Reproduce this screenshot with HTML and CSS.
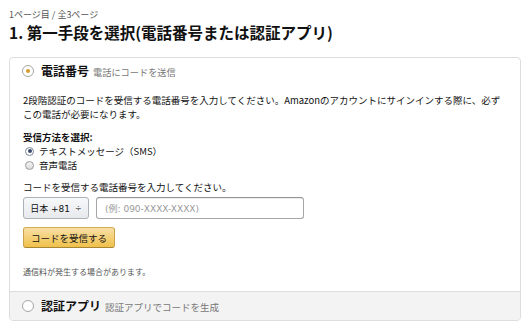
FILE: index.html
```html
<!DOCTYPE html>
<html lang="ja">
<head>
  <meta charset="UTF-8" />
  <title>2段階認証の設定</title>
  <link rel="stylesheet" href="styles.css">
</head>
<body>
  <div class="pagina">
    <div class="migalha">1ページ目 / 全3ページ</div>
    <h1>1. 第一手段を選択(電話番号または認証アプリ)</h1>

    <div class="caixa">
      <div class="opcao opcao-ativa">
        <div class="cabeca">
          <span class="radio grande marcado"></span>
          <span class="titulo">電話番号</span>
          <span class="sub">電話にコードを送信</span>
        </div>
        <div class="corpo">
          <p class="descricao">2段階認証のコードを受信する電話番号を入力してください。Amazonのアカウントにサインインする際に、必ず<br>この電話が必要になります。</p>
          <div class="rotulo">受信方法を選択:</div>
          <label class="escolha"><span class="radio pequeno marcado"></span>テキストメッセージ（SMS）</label>
          <label class="escolha"><span class="radio pequeno"></span>音声電話</label>
          <p class="pedido">コードを受信する電話番号を入力してください。</p>
          <div class="linha-fone">
            <span class="seletor">日本 +81 <span class="setas">÷</span></span>
            <span class="campo">(例: 090-XXXX-XXXX)</span>
          </div>
          <span class="botao">コードを受信する</span>
          <p class="aviso">通信料が発生する場合があります。</p>
        </div>
      </div>

      <div class="opcao opcao-fechada">
        <div class="cabeca">
          <span class="radio grande"></span>
          <span class="titulo">認証アプリ</span>
          <span class="sub sub-grande">認証アプリでコードを生成</span>
        </div>
      </div>
    </div>
  </div>
</body>
</html>
```

FILE: styles.css
```css
* {
  margin: 0; padding: 0; box-sizing: border-box;
}
body {
  font-family: "Noto Sans CJK JP", "Liberation Sans", sans-serif;
  font-size: 9.5px;
  color: #111;
  background: #fff;
}
.pagina {
  padding: 9px 8px 0 9px;
}
.migalha {
  font-size: 9px;
  line-height: 12px;
  color: #555;
}
h1 {
  margin-top: 2px;
  font-size: 15.5px;
  line-height: 18px;
  font-weight: bold;
  color: #111;
}
.caixa {
  margin-top: 16px;
  border: 1px solid #ddd;
  border-radius: 4px;
  overflow: hidden;
}
.cabeca {
  display: flex;
  align-items: center;
  height: 18px;
  padding-left: 12px;
}
.opcao-ativa .cabeca {
  margin-top: 4px;
}
.titulo {
  font-size: 12px;
  font-weight: bold;
  margin-left: 7px;
  line-height: 18px;
}
.sub {
  color: #777;
  font-size: 9.2px;
  margin-left: 4px;
  padding-top: 2px;
}
.sub-grande {
  font-size: 9.5px;
}
.corpo {
  padding: 13px 13px 13px 13px;
}
.descricao {
  line-height: 14px;
}
.rotulo {
  margin-top: 9px;
  font-weight: bold;
  line-height: 14px;
}
.escolha {
  display: flex;
  align-items: center;
  line-height: 14px;
}
.pedido {
  margin-top: 8px;
  line-height: 14px;
}
.linha-fone {
  display: flex;
  gap: 7px;
  margin-top: 3px;
}
.seletor {
  width: 66px;
  height: 22px;
  display: flex;
  align-items: center;
  justify-content: center;
  gap: 5px;
  border: 1px solid #adb1b8;
  border-radius: 3px;
  background: linear-gradient(#f7f8fa, #e7e9ec);
  font-family: "DejaVu Sans", "Noto Sans CJK JP", sans-serif;
  font-size: 9px;
}
.setas {
  font-size: 8px;
  color: #555;
}
.campo {
  width: 208px;
  height: 22px;
  display: flex;
  align-items: center;
  padding-left: 8px;
  border: 1px solid #a6a6a6;
  border-top-color: #949494;
  border-radius: 3px;
  color: #999;
  font-family: "DejaVu Sans", "Noto Sans CJK JP", sans-serif;
  font-size: 9px;
  box-shadow: inset 0 1px 0 rgba(0,0,0,0.07);
}
.botao {
  display: flex;
  align-items: center;
  justify-content: center;
  width: 92px;
  height: 21px;
  margin-top: 8px;
  border: 1px solid #c9a44a;
  border-color: #d2ac52 #c9a24a #a88734;
  border-radius: 3px;
  background: linear-gradient(#f7dfa5, #f0c14b);
  color: #111;
}
.aviso {
  margin-top: 18px;
  font-size: 8px;
  line-height: 12px;
  color: #555;
}
.opcao-fechada {
  border-top: 1px solid #ddd;
  background: #f3f3f3;
  height: 29px;
  display: flex;
  align-items: center;
}
.radio {
  display: inline-block;
  border-radius: 50%;
  position: relative;
  flex: none;
  background: #fff;
}
.radio.grande {
  width: 12px;
  height: 12px;
  border: 1px solid #a6a6a6;
}
.radio.grande.marcado::after {
  content: "";
  position: absolute;
  left: 3px; top: 3px;
  width: 4px; height: 4px;
  border-radius: 50%;
  background: #d99a2b;
}
.radio.pequeno {
  width: 9px;
  height: 9px;
  margin: 0 5px 0 2px;
  border: 1px solid #9a9a9a;
  background: linear-gradient(#f4f4f4, #dcdcdc);
}
.radio.pequeno.marcado {
  background: #fff;
  border-color: #7d8799;
}
.radio.pequeno.marcado::after {
  content: "";
  position: absolute;
  left: 1.5px; top: 1.5px;
  width: 4px; height: 4px;
  border-radius: 50%;
  background: #3a4b6e;
}
```
